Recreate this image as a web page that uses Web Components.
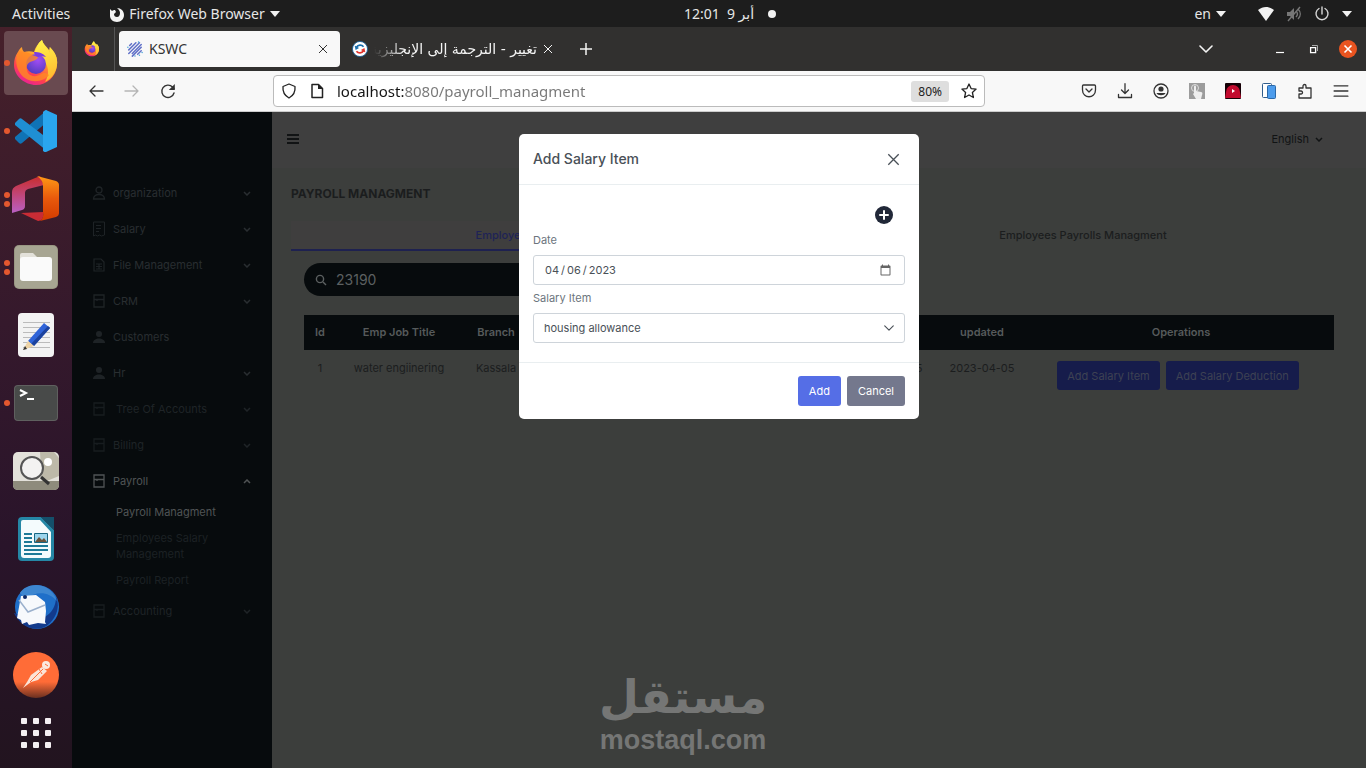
<!DOCTYPE html>
<html lang="en">
<head>
<meta charset="utf-8">
<title>KSWC</title>
<style>
  html, body {
    height: 100%;
    margin: 0;
  }

  body {
    font-family: "Noto Sans", "DejaVu Sans", sans-serif;
    overflow: hidden;
  }
</style>
</head>
<body>
<desk-top></desk-top>

<script>
const icons = {
  // shell and browser chrome
  firefox: ["0 0 48 48", `
    <defs>
      <linearGradient id="body" x1=".8" y1=".1" x2=".3" y2="1">
        <stop offset="0" stop-color="#ffe83d"/><stop offset=".4" stop-color="#ff9a2b"/>
        <stop offset=".75" stop-color="#ff3f4f"/><stop offset="1" stop-color="#e8209a"/>
      </linearGradient>
      <radialGradient id="globe" cx=".6" cy=".3" r=".8">
        <stop offset="0" stop-color="#a24df5"/><stop offset="1" stop-color="#4b3ab8"/>
      </radialGradient>
      <linearGradient id="flame" x1=".5" y1="0" x2=".7" y2="1">
        <stop offset="0" stop-color="#fff04a"/><stop offset="1" stop-color="#ffb52e"/>
      </linearGradient>
    </defs>
    <path fill="url(#body)" d="M6 13c1-2 2-4 4-5 0 2 1 4 2 5 3-1 7-1 10 0 1-4 4-9 8-12 1 4 4 6 7 10 1-1 1-2 1-3 5 5 8 11 7 18-1 12-10 20-21 20S2 37 2 26c0-5 1-9 4-13z"/>
    <path fill="url(#flame)" d="M30 1c1 5 6 8 8 13 0-2 0-4-1-6 6 5 9 11 8 18-1 8-6 14-12 17 5-8 4-18-4-24-3-1-6-1-7-4 2-6 4-11 8-14z"/>
    <circle cx="24" cy="25" r="10" fill="url(#globe)"/>
    <path fill="#ff8a24" d="M6 13c4-1 9 0 13 2 2 2 5 2 7 3 0 2-4 4-8 5-4 2-4 7-2 11 3 4 9 4 13 1 3-2 6-1 8 1-6 8-22 9-29-2-4-6-5-14-2-21z" opacity=".8"/>
    <path fill="#7a3de0" d="M22 13c5 0 9 1 12 5-3-1-6-1-8 0-2-1-4-2-4-5z"/>`],
  firefoxMono: ["0 0 16 16", `<path fill="#f2f2f2" d="M2 3l2 2c1-1 2-1 3-1l1 2-2 2c0 2 1 3 3 3s3-2 3-4-1-3-3-5c4 0 7 3 7 7 0 4-3 7-7 7s-7-3-7-6c0-3 0-5 0-7z"/>`],
  triangle: ["0 0 10 6", `<path fill="#f2f2f2" d="M0 0h10L5 6z"/>`],
  wifi: ["0 0 16 14", `<path fill="#f2f2f2" d="M0 3c5-4 11-4 16 0L8 14z"/>`],
  muted: ["0 0 16 16", `<path fill="#777" d="M1 6h3l4-4v12l-4-4H1z"/><path fill="none" stroke="#777" stroke-width="1.4" d="M10 5c2 2 2 4 0 6M12 3c3 3 3 7 0 10M2 15L14 1"/>`],
  power: ["0 0 16 16", `<path fill="none" stroke="#d8d8d8" stroke-width="1.4" stroke-linecap="round" d="M5 2.500a6 6 0 1 0 6 0M8 1v7"/>`],
  kswc: ["0 0 18 18", `<g stroke="#6272c8" stroke-width="1.7" stroke-linecap="round"><path d="M3 5l2-2M2 10l8-8M2 14l12-12M6 14L16 4M6 17l10-10M12 15l4-4"/><path stroke="#4aa3d8" d="M1 7v0M9 17v0M13 1v0M17 13v0M14 16v0"/></g>`],
  translate: ["0 0 18 18", `<circle cx="9" cy="9" r="8.500" fill="#fff" stroke="#1a5f96"/><path fill="none" stroke="#1a6fae" stroke-width="2" d="M13 6.500A5 5 0 0 0 5 7"/><path fill="none" stroke="#e0332c" stroke-width="2" d="M5 11.500a5 5 0 0 0 8-.5"/><path fill="#1a6fae" d="M3 5l1 5 4-2z"/><path fill="#e0332c" d="M15 13l-1-5-4 2z"/>`],
  close: ["0 0 10 10", `<path fill="none" stroke="currentColor" stroke-width="1" d="M1 1l8 8M9 1L1 9"/>`],
  plus: ["0 0 14 14", `<path fill="none" stroke="#f4f4f4" stroke-width="1.5" d="M7 1v12M1 7h12"/>`],
  down: ["0 0 14 8", `<path fill="none" stroke="currentColor" stroke-width="1.6" stroke-linecap="round" stroke-linejoin="round" d="M1 1l6 6 6-6"/>`],
  caretDown: ["0 0 8 5", `<path fill="none" stroke="currentColor" stroke-width="1.5" d="M1 1l3 3 3-3"/>`],
  caretUp: ["0 0 8 5", `<path fill="none" stroke="currentColor" stroke-width="1.5" d="M1 4l3-3 3 3"/>`],
  minimize: ["0 0 10 10", `<path stroke="#fff" stroke-width="1.2" d="M1 8.500h8"/>`],
  restore: ["0 0 10 10", `<path fill="none" stroke="#aaa" d="M3 1.500h5.500V7"/><path fill="none" stroke="#fff" stroke-width="1.3" d="M1.600 3.600h5v5h-5z"/>`],
  windowClose: ["0 0 18 18", `<circle cx="9" cy="9" r="9" fill="#e95420"/><path stroke="#fff" stroke-width="1.600" d="M5.500 5.500l7 7M12.500 5.500l-7 7"/>`],
  back: ["0 0 16 16", `<path fill="none" stroke="currentColor" stroke-width="1.300" stroke-linecap="round" stroke-linejoin="round" d="M15 8H2M7 3L2 8l5 5"/>`],
  forward: ["0 0 16 16", `<path fill="none" stroke="currentColor" stroke-width="1.300" stroke-linecap="round" stroke-linejoin="round" d="M1 8h13M9 3l5 5-5 5"/>`],
  reload: ["0 0 16 16", `<path fill="none" stroke="#333" stroke-width="1.400" stroke-linecap="round" d="M14 10a6.200 6.200 0 1 1-1.500-6l1.500 1.500"/><path fill="#333" d="M14.800 1v6h-6z"/>`],
  shield: ["0 0 16 16", `<path fill="none" stroke="#222" stroke-width="1.300" stroke-linejoin="round" d="M8 1l6 2.500c.5 5-1.500 9-6 11.500C3.500 12.500 1.500 8.500 2 3.500z"/>`],
  file: ["0 0 16 16", `<path fill="none" stroke="#222" stroke-width="1.500" stroke-linejoin="round" d="M3 1.500h6.500l4 4v9H3z"/><path fill="#222" d="M9 1l5 5H9z"/>`],
  star: ["0 0 16 16", `<path fill="none" stroke="#222" stroke-width="1.300" stroke-linejoin="round" d="M8 1l2.100 4.600 5 .5-3.700 3.400 1 5L8 12l-4.400 2.500 1-5L.9 6.100l5-.5z"/>`],
  pocket: ["0 0 16 16", `<g fill="none" stroke="#333" stroke-width="1.300" stroke-linecap="round" stroke-linejoin="round"><path d="M1.500 3c0-.6.400-1 1-1h11c.6 0 1 .4 1 1v4c0 9-13 9-13 0z"/><path d="M5 6l3 3 3-3"/></g>`],
  download: ["0 0 16 16", `<path fill="none" stroke="#333" stroke-width="1.300" stroke-linecap="round" stroke-linejoin="round" d="M8 .7v9.300M4.500 7L8 10.500 11.500 7M1.500 11.500v3h13v-3"/>`],
  account: ["0 0 16 16", `<circle cx="8" cy="8" r="7" fill="none" stroke="#333" stroke-width="1.300"/><circle cx="8" cy="6" r="2.600" fill="#333"/><path fill="#333" d="M3.500 10h9c-1 3-8 3-9 0z"/>`],
  touch: ["0 0 16 16", `<path fill="#9c9c9c" d="M0 0h16v16H0z"/><circle cx="6" cy="5" r="3.500" fill="none" stroke="#ddd"/><path fill="#eee" d="M5 4c0-2 2-2 2 0v4l5 1c1 0 2 1 1 3l-1 4H7l-3-5 1-1z"/>`],
  video: ["0 0 16 16", `<rect width="16" height="16" rx="1" fill="#150006"/><path fill="#c20a2e" d="M1 9a7 7 0 0 1 14 0l1 6H0z"/><path fill="#fff" d="M7 6l3 2-3 2z"/>`],
  devices: ["0 0 16 16", `<rect x="1.500" y=".5" width="9" height="14" rx="1" fill="#fff" stroke="#315d8c"/><rect x="6.500" y="2.500" width="8" height="13" rx="1" fill="#4d9cec" stroke="#2b68a8"/>`],
  puzzle: ["0 0 16 16", `<path fill="none" stroke="#333" stroke-width="1.300" stroke-linejoin="round" d="M2 15v-4h2c2 0 2-3 0-3H2V5h4V3c0-2 3-2 3 0v2h5v10z"/>`],
  menu: ["0 0 14 12", `<path stroke="currentColor" stroke-width="1.200" stroke-linecap="round" d="M1 1.500h12M1 6h12M1 10.500h12"/>`],
  bars: ["0 0 12 12", `<path stroke="currentColor" stroke-width="1.800" d="M0 2h12M0 6h12M0 10h12"/>`],

  // dock launchers
  code: ["0 0 48 48", `<path fill="#1073b5" d="M3 32l4 4c1 1 2 1 3 0L35 15V3L3 30z"/><path fill="#1f8fd3" d="M3 16l4-4c1-1 2-1 3 0l25 19v13L3 18z"/><path fill="#2aa6ee" d="M34 3l11 5v32l-11 5c-1 0-2 0-3-1V5c1-1 2-2 3-2z"/>`],
  office: ["0 0 48 48", `<defs><linearGradient id="left" x2="0" y2="1"><stop stop-color="#c92c2c"/><stop offset="1" stop-color="#b960c4"/></linearGradient><linearGradient id="right" x2="0" y2="1"><stop stop-color="#ff9a16"/><stop offset=".5" stop-color="#e8590c"/><stop offset="1" stop-color="#d23a00"/></linearGradient></defs>
    <path fill="url(#left)" d="M0 17q0-4 4-6L28 1l4 9-16 4q-3 1-3 4v13q0 3-3 4L0 38z"/><path fill="url(#right)" d="M25 1l19 5c2 1 3 2 3 4v28c0 2-1 3-3 4l-16 4q4-3 3-9V11q0-6-6-10z"/><path fill="#c92c35" d="M9 38l22-1c1 5-1 9-5 9z"/>`],
  folder: ["0 0 48 48", `<rect x="2" y="2" width="44" height="44" rx="5" fill="#999783"/><rect x="3" y="3" width="42" height="42" rx="4" fill="#a7a592"/><path fill="#e3e1da" d="M8 12q0-2 2-2h11l4 4v8H8z"/><rect x="8" y="14" width="32" height="24" rx="3" fill="#fafafa"/>`],
  notes: ["0 0 48 48", `<rect x="6" y="2" width="36" height="44" rx="4" fill="#f3f3f3"/><path stroke="#bbb" d="M11 11.500h27M11 16.500h27M11 21.500h27M11 26.500h27M11 31.500h27M11 36.500h27"/><path fill="#2f63d8" d="M16 30L32 12l6 5-16 18z"/><path fill="#1c429d" d="M19 33l17-18 2 2-16 18z"/><path fill="#edd3a6" d="M16 30l6 5-11 4z"/><path fill="#333" d="M13 35l-2 4 4-1z"/>`],
  terminal: ["0 0 48 48", `<rect x="2" y="6" width="44" height="36" rx="4" fill="#5f605f"/><rect x="3" y="7" width="42" height="34" rx="3" fill="#484a49"/><path fill="none" stroke="#fff" stroke-width="2" d="M8 11l6 3-6 3M15 20h7"/>`],
  viewer: ["0 0 48 48", `<rect x="1" y="5" width="46" height="38" rx="5" fill="#e3e1da"/><path fill="#bdb9a9" d="M28 5h14l5 6v18L30 36z"/><path fill="#8e8b7c" d="M1 34h46v4q0 5-5 5H6q-5 0-5-5z"/><circle cx="36" cy="15" r="4" fill="#fff"/><circle cx="20" cy="21" r="11" fill="#f6f6f6" fill-opacity=".8" stroke="#555" stroke-width="2"/><path stroke="#333" stroke-width="3" d="M29 30l8 7"/>`],
  writer: ["0 0 48 48", `<path fill="#2587a6" d="M10 2h19l13 13v27q0 4-4 4H10q-4 0-4-4V6q0-4 4-4z"/><path fill="#f4fbfd" d="M11 5h17l11 12v23q0 3-3 3H12q-3 0-3-3V7q0-2 2-2z"/><path fill="#14506b" d="M29 2h13v13z"/><path stroke="#1d7a98" stroke-width="2" d="M12 19h8M12 23h8M12 27h8M12 31h24M12 35h24M12 39h18"/><path fill="#9bd5ed" stroke="#176682" d="M22.500 18.500h13v9h-13z"/><path fill="#6a533d" d="M23 27l4-5 3 3 2-2 3 4z"/>`],
  mail: ["0 0 48 48", `<circle cx="25" cy="24" r="22" fill="#1f6fc9"/><path fill="#123a8c" d="M2 30c6 14 24 22 36 10 9-9 9-20 6-26 0 14-10 22-20 22z"/><path fill="#3d86d0" d="M8 10C14-1 38-3 45 18 36 8 24 8 14 16z"/><path fill="#f7f9fc" d="M9 13l15-1 9 7 1 9-1 11 1 2-8-1-9 2-2-3-5 2-1-4-4-2z"/><path fill="none" stroke="#9bb0cc" stroke-width="1.500" d="M7 17l9 12 17-7"/><circle cx="13" cy="14" r="2" fill="#0b2968"/>`],
  postman: ["0 0 48 48", `<defs><linearGradient id="orange" x2="0" y2="1"><stop offset=".65" stop-color="#ff6c37"/><stop offset="1" stop-color="#6b3020"/></linearGradient></defs><circle cx="24" cy="24" r="23" fill="url(#orange)"/><circle cx="34" cy="14" r="4" fill="#fbe9df"/><path fill="#fbe3d6" d="M30 16l5 4-9 9-7 2-8 6 4-6 4-7z"/><path stroke="#ff6c37" d="M31 18L18 31M33 13l3 2M27 18l3 5"/>`],
  grid: ["0 0 48 48", `<g fill="#f4eff2"><rect x="9" y="9" width="6" height="6" rx="1"/><rect x="21" y="9" width="6" height="6" rx="1"/><rect x="33" y="9" width="6" height="6" rx="1"/><rect x="9" y="21" width="6" height="6" rx="1"/><rect x="21" y="21" width="6" height="6" rx="1"/><rect x="33" y="21" width="6" height="6" rx="1"/><rect x="9" y="33" width="6" height="6" rx="1"/><rect x="21" y="33" width="6" height="6" rx="1"/><rect x="33" y="33" width="6" height="6" rx="1"/></g>`],

  // payroll application
  user: ["0 0 14 16", `<g fill="none" stroke="currentColor" stroke-width="1.300"><circle cx="7" cy="5" r="3"/><path d="M1.500 14c0-6 11-6 11 0z"/></g>`],
  userFill: ["0 0 14 16", `<g fill="currentColor"><circle cx="7" cy="5" r="3"/><path d="M1 14c0-6 12-6 12 0z"/></g>`],
  receipt: ["0 0 14 16", `<path fill="none" stroke="currentColor" d="M1.500 1v14l2-1 2 1 2-1 2 1 3-1V1zM4 4.500h5M4 7.500h5M4 10.500h3"/>`],
  document: ["0 0 14 16", `<path fill="none" stroke="currentColor" stroke-width="1.200" d="M2 2h7l3 3v9H2zM4 7h6M4 9.500h6M4 12h6M7 7v5"/>`],
  box: ["0 0 14 16", `<path fill="none" stroke="currentColor" stroke-width="1.300" d="M2 2h10v12H2zM2 6.500h10M5 6v2"/>`],
  search: ["0 0 12 12", `<circle cx="5" cy="5" r="3.600" fill="none" stroke="currentColor" stroke-width="1.400"/><path stroke="currentColor" stroke-width="1.400" d="M8 8l3 3"/>`],
  addCircle: ["0 0 18 18", `<circle cx="9" cy="9" r="9" fill="#212838"/><path stroke="#fff" stroke-width="2" stroke-linecap="round" d="M9 5v8M5 9h8"/>`],
};

class SvgIcon extends HTMLElement {
  connectedCallback() {
    const [viewBox, shapes] = icons[this.getAttribute("name")];

    this.attachShadow({ mode: "open" }).innerHTML = `
<style>
  :host {
    display: block;
    flex: none;
    width: var(--icon-width, 16px);
    height: var(--icon-height, 16px);
  }

  svg {
    display: block;
    width: 100%;
    height: 100%;
  }
</style>
<svg viewBox="${viewBox}" aria-hidden="true">${shapes}</svg>
`;
  }
}

const reset = `
  *, *::before {
    box-sizing: border-box;
  }

  button, input, select {
    margin: 0;
    padding: 0;
    border: 0;
    background: none;
    color: inherit;
    font: inherit;
  }

  button {
    display: flex;
    align-items: center;
    justify-content: center;
  }

  a {
    color: inherit;
    text-decoration: none;
  }
`;

// Registers an element whose shadow root is one fixed template.
function part(name, styles, markup) {
  const tmpl = document.createElement("template");

  tmpl.innerHTML = `<style>${reset}${styles}</style>${markup}`;

  customElements.define(name, class extends HTMLElement {
    constructor() {
      super();
      this.attachShadow({ mode: "open" }).append(tmpl.content.cloneNode(true));
    }
  });
}

customElements.define("svg-icon", SvgIcon);

part("top-panel", `
  :host {
    display: grid;
    grid-template-columns: 1fr auto 1fr;
    align-items: center;
    height: 27px;
    padding: 0 14px 0 12px;
    background: #1d1d1d;
    color: #e6e6e6;
    font-size: 14px;
    line-height: 20px;
  }

  div, button {
    display: flex;
    align-items: center;
  }

  .start { gap: 38px; }
  .start button, .lang { gap: 5px; }
  .clock { gap: 14px; padding-left: 96px; }
  .clock::after {
    content: "";
    width: 8px;
    height: 8px;
    border-radius: 50%;
    background: #f2f2f2;
  }
  .end { justify-content: flex-end; gap: 32px; }
  .status { gap: 12px; }
  .arrow { --icon-width: 10px; --icon-height: 6px; }
`, `
<div class="start">
  <button type="button">Activities</button>
  <button type="button"><svg-icon name="firefoxMono"></svg-icon>Firefox Web Browser<svg-icon class="arrow" name="triangle"></svg-icon></button>
</div>
<div class="clock"><time dir="rtl">أبر 9 &nbsp;12:01</time></div>
<div class="end">
  <button class="lang" type="button">en<svg-icon class="arrow" name="triangle"></svg-icon></button>
  <div class="status">
    <svg-icon name="wifi"></svg-icon>
    <svg-icon name="muted"></svg-icon>
    <svg-icon name="power"></svg-icon>
    <svg-icon class="arrow" name="triangle"></svg-icon>
  </div>
</div>
`);

class DockItem extends HTMLElement {
  connectedCallback() {
    const windows = Number(this.getAttribute("windows") || 0);

    this.attachShadow({ mode: "open" }).innerHTML = `
<style>
  :host {
    display: block;
    --icon-width: 48px;
    --icon-height: 48px;
  }

  button {
    display: grid;
    place-items: center;
    position: relative;
    width: 64px;
    height: 64px;
    padding: 0;
    border: 0;
    border-radius: 4px;
    background: none;
  }

  :host([active]) button {
    background: #694a50;
  }

  .windows {
    position: absolute;
    left: 0;
    display: grid;
    gap: 3px;
  }

  i {
    width: 6px;
    height: 6px;
    border-radius: 50%;
    background: #e4582f;
  }
</style>
<button type="button" aria-label="${this.getAttribute("label")}">
  <span class="windows">${"<i></i>".repeat(windows)}</span>
  <svg-icon name="${this.getAttribute("icon")}"></svg-icon>
</button>
`;
  }
}

customElements.define("dock-item", DockItem);

part("dock-bar", `
  :host {
    display: flex;
    flex-direction: column;
    gap: 4px;
    width: 72px;
    padding: 4px 4px 0;
    background: linear-gradient(#46202a, #35192c 40%, #29142a 70%, #22141f);
  }

  .apps { margin-top: -10px; }
`, `
<dock-item icon="firefox" label="Firefox" windows="1" active></dock-item>
<dock-item icon="code" label="Code" windows="1"></dock-item>
<dock-item icon="office" label="Office" windows="2"></dock-item>
<dock-item icon="folder" label="Files" windows="2"></dock-item>
<dock-item icon="notes" label="Text Editor"></dock-item>
<dock-item icon="terminal" label="Terminal" windows="1"></dock-item>
<dock-item icon="viewer" label="Image Viewer"></dock-item>
<dock-item icon="writer" label="Writer"></dock-item>
<dock-item icon="mail" label="Thunderbird"></dock-item>
<dock-item icon="postman" label="Postman"></dock-item>
<dock-item class="apps" icon="grid" label="Show Applications"></dock-item>
`);

part("browser-tabs", `
  :host {
    display: flex;
    align-items: center;
    height: 44px;
    background: #31302f;
    color: #f4f4f4;
    font-size: 14px;
    line-height: 20px;
  }

  .pinned {
    width: 43px;
    height: 100%;
    padding-right: 2px;
    border-right: 1px solid #555;
  }

  .tab {
    display: flex;
    align-items: center;
    gap: 6px;
    height: 36px;
    padding: 0 12px;
    border-radius: 4px;
  }

  .active {
    width: 221px;
    margin-left: 4px;
    padding-left: 8px;
    background: #f8f8f8;
    color: #333;
  }

  .title { flex: 1; }

  .arabic {
    width: 163px;
    overflow: hidden;
    font: 14px/20px "DejaVu Sans", sans-serif;
    white-space: nowrap;
    mask-image: linear-gradient(90deg, transparent, #000 30px);
  }

  .close { --icon-width: 10px; --icon-height: 10px; }
  .add { --icon-width: 14px; --icon-height: 14px; margin-left: 14px; }
  .window { display: flex; align-items: center; gap: 24px; margin-left: auto; padding-right: 9px; }
  .list { --icon-width: 14px; --icon-height: 8px; margin-right: 38px; }
  .small { --icon-width: 10px; --icon-height: 10px; }
  .quit { --icon-width: 18px; --icon-height: 18px; margin-left: -4px; }
`, `
<button class="pinned" type="button" aria-label="Firefox View"><svg-icon name="firefox"></svg-icon></button>
<div class="tab active"><svg-icon name="kswc"></svg-icon><span class="title">KSWC</span><button class="close" type="button" aria-label="Close tab"><svg-icon name="close"></svg-icon></button></div>
<div class="tab"><svg-icon name="translate"></svg-icon><span class="arabic" dir="rtl">تغيير - الترجمة إلى الإنجليزية</span><button class="close" type="button" aria-label="Close tab"><svg-icon name="close"></svg-icon></button></div>
<button class="add" type="button" aria-label="New tab"><svg-icon name="plus"></svg-icon></button>
<div class="window">
  <button class="list" type="button" aria-label="List all tabs"><svg-icon name="down"></svg-icon></button>
  <button class="small" type="button" aria-label="Minimize"><svg-icon name="minimize"></svg-icon></button>
  <button class="small" type="button" aria-label="Restore"><svg-icon name="restore"></svg-icon></button>
  <button class="quit" type="button" aria-label="Close"><svg-icon name="windowClose"></svg-icon></button>
</div>
`);

part("browser-toolbar", `
  :host {
    display: flex;
    align-items: center;
    height: 41px;
    padding: 0 17px 0 16px;
    border-bottom: 1px solid #ccc;
    background: #f8f8f8;
    color: #333;
  }

  .history, .extensions { display: flex; gap: 20px; }
  .next { color: #b5b5b5; }

  .address {
    display: flex;
    align-items: center;
    flex: 0 1 712px;
    gap: 12px;
    height: 32px;
    margin-left: 97px;
    padding: 0 7px;
    border: 1px solid #bbb;
    border-radius: 4px;
    background: #fff;
  }

  /* the host is darker than the rest of the address */
  .address input {
    flex: 1;
    min-width: 0;
    background: linear-gradient(90deg, #151515 67px, #777 67px);
    background-clip: text;
    -webkit-text-fill-color: transparent;
    font-size: 15px;
    line-height: 20px;
    outline: 0;
  }

  .zoom {
    height: 21px;
    padding: 0 7px;
    border-radius: 3px;
    background: #dedede;
    color: #222;
    font-size: 12px;
  }

  .extensions { margin-left: auto; }
`, `
<div class="history">
  <button type="button" aria-label="Back"><svg-icon name="back"></svg-icon></button>
  <button class="next" type="button" aria-label="Forward"><svg-icon name="forward"></svg-icon></button>
  <button type="button" aria-label="Reload"><svg-icon name="reload"></svg-icon></button>
</div>
<div class="address">
  <svg-icon name="shield"></svg-icon>
  <svg-icon name="file"></svg-icon>
  <input type="text" aria-label="Address" value="localhost:8080/payroll_managment">
  <button class="zoom" type="button">80%</button>
  <button type="button" aria-label="Bookmark"><svg-icon name="star"></svg-icon></button>
</div>
<div class="extensions">
  <svg-icon name="pocket"></svg-icon>
  <svg-icon name="download"></svg-icon>
  <svg-icon name="account"></svg-icon>
  <svg-icon name="touch"></svg-icon>
  <svg-icon name="video"></svg-icon>
  <svg-icon name="devices"></svg-icon>
  <svg-icon name="puzzle"></svg-icon>
  <svg-icon name="menu"></svg-icon>
</div>
`);

part("nav-item", `
  :host {
    display: block;
    color: #292e31;
  }

  :host([dim]) { color: #1f2427; }
  :host([active]) { color: #505455; }

  a {
    display: flex;
    align-items: center;
    gap: 7px;
    height: 36px;
    padding: 0 21px 0 20px;
  }

  span { flex: 1; }
`, `
<a href="#"><slot name="icon"></slot><span><slot></slot></span><slot name="arrow"></slot></a>
<slot name="menu"></slot>
`);

class AppSidebar extends HTMLElement {
  connectedCallback() {
    const items = [
      ["user", "organization", "caretDown"],
      ["receipt", "Salary", "caretDown"],
      ["document", "File Management", "caretDown"],
      ["box", "CRM", "caretDown"],
      ["userFill", "Customers"],
      ["userFill", "Hr", "caretDown"],
      ["box", "&nbsp;Tree Of Accounts", "caretDown", "dim"],
      ["box", "Billing", "caretDown", "dim"],
      ["box", "Payroll", "caretUp", "active"],
      ["box", "Accounting", "caretDown", "dim"],
    ];
    const menu = `
<div class="menu" slot="menu">
  <a class="current" href="#">Payroll Managment</a>
  <a href="#">Employees Salary<br>Management</a>
  <a href="#">Payroll Report</a>
</div>`;

    this.attachShadow({ mode: "open" }).innerHTML = `
<style>
  :host {
    display: block;
    width: 200px;
    box-sizing: border-box;
    padding-top: 63px;
    background: #070b0d;
    line-height: 16px;
  }

  .icon { --icon-width: 14px; --icon-height: 16px; }
  nav-item:not([active]) .icon { opacity: .7; }
  .arrow { --icon-width: 8px; --icon-height: 5px; }

  .menu a {
    display: block;
    padding: 5px 44px;
    color: #1c2124;
    text-decoration: none;
  }

  .menu .current { color: #505455; }
</style>
<nav>${
      items.map(([icon, label, arrow, state = ""]) => `
  <nav-item ${state}>
    <svg-icon class="icon" slot="icon" name="${icon}"></svg-icon>${label}
    ${arrow ? `<svg-icon class="arrow" slot="arrow" name="${arrow}"></svg-icon>` : ""}
    ${state === "active" ? menu : ""}
  </nav-item>`).join("")
    }
</nav>
`;
  }
}

customElements.define("app-sidebar", AppSidebar);

part("payroll-page", `
  :host {
    display: flex;
    flex-direction: column;
    min-width: 0;
    background: #3c3e3c;
    color: #1b1d1e;
  }

  header {
    display: flex;
    align-items: center;
    justify-content: space-between;
    height: 56px;
    padding: 0 43px 2px 15px;
    background: #3f3f3f;
    color: #111314;
  }

  .toggle { --icon-width: 12px; --icon-height: 12px; }
  .lang { gap: 6px; --icon-width: 8px; --icon-height: 5px; }

  main { padding: 16px 19px 0; }

  h1 {
    margin: 0 0 17px;
    font-size: 12px;
    font-weight: 700;
    line-height: 20px;
  }

  .tabs {
    display: grid;
    grid-template-columns: 1fr 1fr;
  }

  .tabs a {
    height: 30px;
    font-weight: 500;
    line-height: 28px;
    text-align: center;
  }

  .tabs .current {
    border-bottom: 2px solid #1e2150;
    background: #3f3e3e;
    color: #1e2356;
  }

  .panel { padding: 12px 13px; }

  .search {
    display: flex;
    align-items: center;
    gap: 9px;
    width: 50%;
    height: 33px;
    margin-bottom: 19px;
    padding: 0 11px;
    border-radius: 17px;
    background: #070b0d;
    color: #5c6061;
    --icon-width: 12px;
    --icon-height: 12px;
  }

  .search input {
    flex: 1;
    min-width: 0;
    font-size: 14px;
  }

  table {
    width: 100%;
    border-collapse: collapse;
    table-layout: fixed;
    text-align: center;
  }

  th, td { padding: 0; }
  th {
    height: 35px;
    padding-bottom: 2px;
    background: #070b0d;
    color: #565a5b;
    font-weight: 600;
  }
  td {
    padding-top: 9px;
    line-height: 18px;
    vertical-align: top;
  }

  .actions {
    display: flex;
    justify-content: center;
    gap: 6px;
    padding: 2px 6px 0 0;
  }

  .actions button {
    height: 29px;
    padding: 0 10px;
    border-radius: 3px;
    background: #161c4b;
    color: #3e4253;
  }
`, `
<header>
  <button class="toggle" type="button" aria-label="Menu"><svg-icon name="bars"></svg-icon></button>
  <button class="lang" type="button">English<svg-icon name="caretDown"></svg-icon></button>
</header>
<main>
  <h1>PAYROLL MANAGMENT</h1>
  <nav class="tabs">
    <a class="current" href="#">Employees Salary Managment</a>
    <a href="#">Employees Payrolls Managment</a>
  </nav>
  <div class="panel">
    <label class="search"><svg-icon name="search"></svg-icon><input type="text" aria-label="Search" value="23190"></label>
    <table>
      <colgroup>
        <col style="width: 32px"><col style="width: 126px"><col style="width: 68px"><col>
        <col style="width: 92px"><col style="width: 92px"><col style="width: 306px">
      </colgroup>
      <thead>
        <tr><th>Id</th><th>Emp Job Title</th><th>Branch</th><th></th><th>created</th><th>updated</th><th>Operations</th></tr>
      </thead>
      <tbody>
        <tr>
          <td>1</td><td>water engiinering</td><td>Kassala</td><td></td><td>2023-04-05</td><td>2023-04-05</td>
          <td><div class="actions"><button type="button">Add Salary Item</button><button type="button">Add Salary Deduction</button></div></td>
        </tr>
      </tbody>
    </table>
  </div>
</main>
`);

part("modal-dialog", `
  :host {
    display: block;
    box-sizing: border-box;
    width: 400px;
    border-radius: 5px;
    background: #fff;
    color: #495057;
  }

  header, footer {
    display: flex;
    align-items: center;
    padding: 0 14px;
  }

  header {
    justify-content: space-between;
    height: 51px;
    padding-right: 19px;
    border-bottom: 1px solid #e9eef0;
    --icon-width: 13px;
    --icon-height: 13px;
  }

  h2 {
    margin: 0;
    font-size: 14px;
    font-weight: 500;
    line-height: 20px;
  }

  .body { padding: 21px 14px 19px; }

  footer {
    justify-content: flex-end;
    gap: 6px;
    height: 57px;
    border-top: 1px solid #e9eef0;
  }
`, `
<header><h2><slot name="title"></slot></h2><button type="button" aria-label="Close"><svg-icon name="close"></svg-icon></button></header>
<div class="body"><slot></slot></div>
<footer><slot name="actions"></slot></footer>
`);

part("salary-form", `
  :host {
    display: block;
    color: #495057;
  }

  .add {
    margin: 0 12px 7px auto;
    --icon-width: 18px;
    --icon-height: 18px;
  }

  label {
    display: block;
    margin-bottom: 6px;
    color: #6c757d;
    line-height: 18px;
  }

  .field {
    display: block;
    width: 100%;
    height: 30px;
    border: 1px solid #ced4da;
    border-radius: 3px;
    background: #fff;
  }

  input.field {
    margin-bottom: 4px;
    padding: 0 12px 0 10px;
  }

  ::-webkit-datetime-edit-text { padding: 0 1px; }
  ::-webkit-calendar-picker-indicator {
    width: 13px;
    height: 13px;
    padding: 0;
    opacity: .6;
  }

  .select {
    display: grid;
    align-items: center;
    --icon-width: 10px;
    --icon-height: 6px;
  }

  .select > * { grid-area: 1 / 1; }
  .select svg-icon { justify-self: end; margin-right: 11px; pointer-events: none; }

  select.field {
    padding: 0 10px;
    appearance: none;
  }
`, `
<button class="add" type="button" aria-label="Add row"><svg-icon name="addCircle"></svg-icon></button>
<label for="date">Date</label>
<input class="field" id="date" type="date" value="2023-04-06">
<label for="item">Salary Item</label>
<div class="select">
  <select class="field" id="item"><option>housing allowance</option></select>
  <svg-icon name="down"></svg-icon>
</div>
`);

part("action-button", `
  :host { display: block; }

  button {
    height: 30px;
    padding: 0 11px;
    border-radius: 3px;
    background: #556ee6;
    color: #fff;
  }

  :host([secondary]) button { background: #74788d; }
`, `<button type="button"><slot></slot></button>`);

part("water-mark", `
  :host {
    display: grid;
    justify-items: center;
    color: #757675;
    font-weight: 700;
    pointer-events: none;
  }

  .name { font: 700 46px/54px "DejaVu Sans", sans-serif; }
  .site { font: 700 27px/32px "Liberation Sans", sans-serif; }
`, `
<span class="name" dir="rtl">مستقل</span>
<span class="site">mostaql.com</span>
`);

part("desk-top", `
  :host {
    display: grid;
    grid-template: auto 1fr / auto 1fr;
    position: relative;
    height: 100vh;
    overflow: hidden;
  }

  top-panel { grid-column: 1 / -1; }
  dock-bar { min-height: 0; }

  .browser {
    display: flex;
    flex-direction: column;
    min-width: 0;
    min-height: 0;
  }

  .app {
    display: grid;
    grid-template-columns: auto 1fr;
    flex: 1;
    position: relative;
    min-height: 0;
    font: 11px/16px Inter, "Noto Sans", sans-serif;
  }

  .overlay {
    position: absolute;
    inset: 0;
    display: flex;
    justify-content: center;
    align-items: flex-start;
    padding-top: 22px;
  }

  /* centred on the whole screen, over the application */
  water-mark {
    position: absolute;
    right: 0;
    bottom: 12px;
    left: 0;
  }
`, `
<top-panel></top-panel>
<dock-bar></dock-bar>
<div class="browser">
  <browser-tabs></browser-tabs>
  <browser-toolbar></browser-toolbar>
  <div class="app">
    <app-sidebar></app-sidebar>
    <payroll-page></payroll-page>
    <div class="overlay">
      <modal-dialog role="dialog" aria-label="Add Salary Item">
        <span slot="title">Add Salary Item</span>
        <salary-form></salary-form>
        <action-button slot="actions">Add</action-button>
        <action-button slot="actions" secondary>Cancel</action-button>
      </modal-dialog>
    </div>
  </div>
</div>
<water-mark></water-mark>
`);
</script>
</body>
</html>
